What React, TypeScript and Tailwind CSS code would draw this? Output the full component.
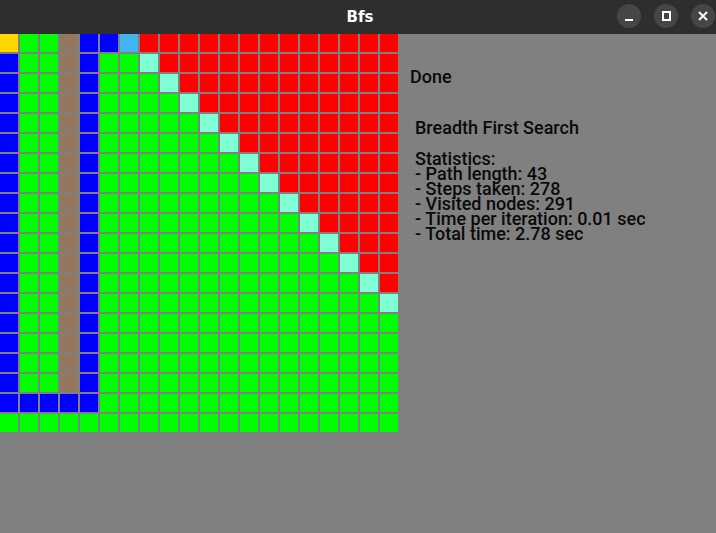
import React from "react";

type Cell = "start" | "end" | "path" | "wall" | "visited" | "frontier" | "open";

const N = 20;

const colorOf: Record<Cell, string> = {
  start: "bg-[#ffd700]",
  end: "bg-[#42b4f0]",
  path: "bg-[#0000ff]",
  wall: "bg-[#937760]",
  visited: "bg-[#00ff00]",
  frontier: "bg-[#7fffd4]",
  open: "bg-[#ff0000]",
};

function cellAt(r: number, c: number): Cell {
  if (r === 0 && c === 0) return "start";
  if (r === 0 && c === 6) return "end";
  // path: down col 0, along row 18, up col 4, over to col 5
  if (c === 0 && r >= 1 && r <= 18) return "path";
  if (r === 18 && c <= 4) return "path";
  if (c === 4 && r <= 18) return "path";
  if (r === 0 && c === 5) return "path";
  if (c === 3 && r <= 17) return "wall";
  if (c < 5) return "visited";
  if (r === 0) return "open";
  if (r <= 13) {
    if (c === r + 6) return "frontier";
    if (c > r + 6) return "open";
  }
  return "visited";
}

const stats = [
  "Statistics:",
  "- Path length: 43",
  "- Steps taken: 278",
  "- Visited nodes: 291",
  "- Time per iteration: 0.01 sec",
  "- Total time: 2.78 sec",
];

export default function App() {
  const cells: { key: string; kind: Cell }[] = [];
  for (let r = 0; r < N; r++) {
    for (let c = 0; c < N; c++) {
      cells.push({ key: `${r}-${c}`, kind: cellAt(r, c) });
    }
  }

  return (
    <div className="w-[716px] h-[533px] bg-[#808080] flex flex-col overflow-hidden">
      {/* Title bar */}
      <div className="h-[34px] bg-[#2e2e2e] flex items-center relative shrink-0">
        <div className="flex-1 text-center text-white font-bold text-[15px] font-['DejaVu_Sans',sans-serif] pl-[4px]">
          Bfs
        </div>
        <div className="absolute right-[1px] top-[4px] flex gap-[13px]">
          <div className="w-[24px] h-[24px] rounded-full bg-[#464646] flex items-center justify-center">
            <div className="w-[8px] h-[2px] bg-white mt-[7px]" />
          </div>
          <div className="w-[24px] h-[24px] rounded-full bg-[#464646] flex items-center justify-center">
            <div className="w-[9px] h-[10px] border-2 border-white" />
          </div>
          <div className="w-[24px] h-[24px] rounded-full bg-[#464646] flex items-center justify-center">
            <svg width="10" height="10" viewBox="0 0 10 10">
              <path d="M1 1 L9 9 M9 1 L1 9" stroke="white" strokeWidth="1.8" />
            </svg>
          </div>
        </div>
      </div>

      <div className="flex">
        {/* Grid */}
        <div className="grid grid-cols-[repeat(20,18px)] gap-[2px] w-[400px] shrink-0">
          {cells.map((cell) => (
            <div key={cell.key} className={`w-[18px] h-[18px] ${colorOf[cell.kind]}`} />
          ))}
        </div>

        {/* Info panel */}
        <div className="flex flex-col font-['Roboto',sans-serif] font-medium text-[18px] text-[#0a0a0a]">
          <div className="ml-[10px] mt-[33px] leading-[20px]">Done</div>
          <div className="ml-[15px] mt-[31px] leading-[20px]">Breadth First Search</div>
          <div className="ml-[15px] mt-[13px] flex flex-col leading-[15px]">
            {stats.map((s) => (
              <div key={s} className="whitespace-pre">
                {s}
              </div>
            ))}
          </div>
        </div>
      </div>
    </div>
  );
}
